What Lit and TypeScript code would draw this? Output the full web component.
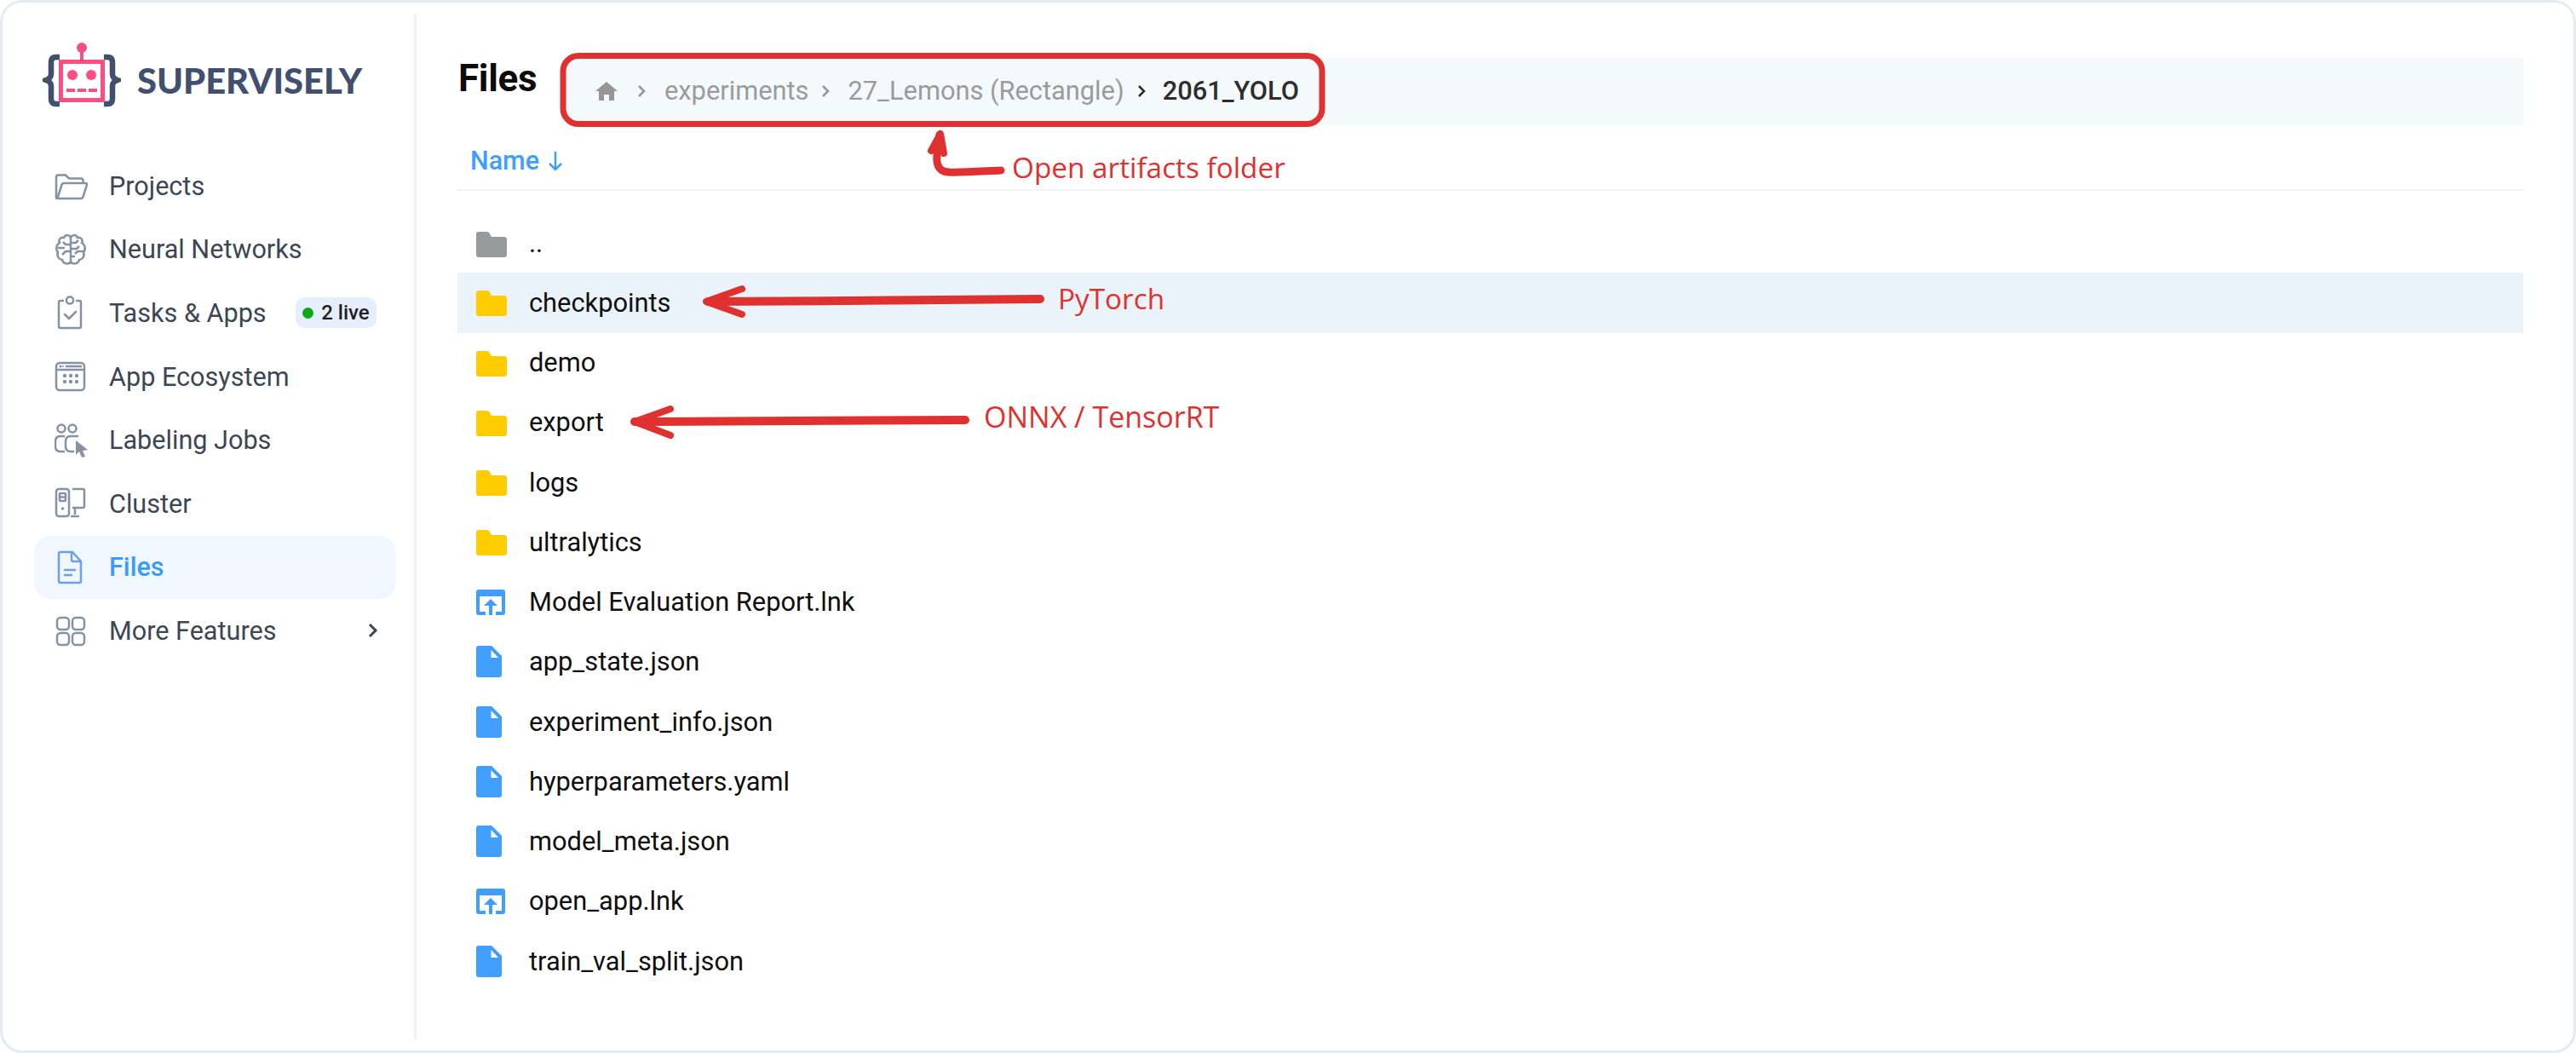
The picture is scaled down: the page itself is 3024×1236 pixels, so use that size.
import { LitElement, html, css, svg } from "lit";
import { customElement } from "lit/decorators.js";

const navIcons: Record<string, unknown> = {
  folder: svg`<path d="M2 34V10q0-2.500 2.500-2.500H13l4 4h14q2.500 0 2.500 2.500v3"/><path d="M2 34.500q1.500 0 2-1.500l4.500-14q.5-2 2.500-2h25q2.500 0 2 2l-4.500 14q-.5 2-2.500 2H4q-2 0-2-1.500Z"/>`,
  brain: svg`<path d="M19 7C19 3 13 1 11 6 7 5 4 9 6 12 2 14 1 20 4 23 2 28 6 32 9 32 10 37 17 38 19 34 21 38 28 37 29 32 32 32 36 28 34 23 37 20 36 14 32 12 34 9 31 5 27 6 25 1 19 3 19 7V34"/><path d="M19 14H13L10 11M4 18H12M19 22H13L9 26M19 28H24M19 12H25L28 9M19 19H26L29 16M34 22H27L24 25"/>`,
  tasks: svg`<path d="M11 6H7q-2 0-2 2v28q0 2 2 2h22q2 0 2-2V8q0-2-2-2h-4"/><rect x="14" y="1.500" width="8" height="8" rx="3.500"/><path d="M12 22l5 5 8-8" stroke-linecap="round"/>`,
  app: svg`<rect x="2" y="4" width="33" height="32" rx="4"/><path d="M2 12h33M13 8h19"/><g fill="#8592a3" stroke="none"><circle cx="7" cy="8" r="1.500"/><circle cx="10" cy="8" r="1"/><circle cx="12" cy="19" r="2.200"/><circle cx="19" cy="19" r="2.200"/><circle cx="26" cy="19" r="2.200"/><circle cx="12" cy="26" r="2.200"/><circle cx="19" cy="26" r="2.200"/><circle cx="26" cy="26" r="2.200"/></g>`,
  jobs: svg`<circle cx="8" cy="6" r="4.500"/><circle cx="21" cy="6" r="4.500"/><path d="M12 15H7q-6 0-6 6v6q0 6 6 6h5M28 15H19q-6 0-6 6v6q0 6 6 6h4"/><path d="M25 20l14 11-6 1 3 7-4 1-3-7-4 4Z" fill="#8592a3" stroke="none"/>`,
  cluster: svg`<rect x="2" y="3" width="15" height="32" rx="3"/><rect x="6" y="8" width="7" height="9" rx="1"/><path d="M6 12.500h7"/><circle cx="9.500" cy="26" r="1.800" fill="#8592a3" stroke="none"/><path d="M21 3h12q2 0 2 2v18q0 2-2 2H21M24 25v8M19 35h10"/>`,
  files: svg`<path d="M7 2h14l10 11v23q0 2-2 2H7q-2 0-2-2V4q0-2 2-2Z"/><path d="M20 2v9q0 2 2 2h9M11 23h14M11 29h10"/>`,
  more: svg`<rect x="3" y="5" width="14" height="14" rx="4"/><rect x="21" y="5" width="14" height="14" rx="4"/><rect x="3" y="23" width="14" height="14" rx="4"/><rect x="21" y="23" width="14" height="14" rx="4"/>`,
};

const nav = [
  ["folder", "Projects"],
  ["brain", "Neural Networks"],
  ["tasks", "Tasks & Apps"],
  ["app", "App Ecosystem"],
  ["jobs", "Labeling Jobs"],
  ["cluster", "Cluster"],
  ["files", "Files"],
  ["more", "More Features"],
];

const rows: [string, string][] = [
  ["up", ".."],
  ["dir", "checkpoints"],
  ["dir", "demo"],
  ["dir", "export"],
  ["dir", "logs"],
  ["dir", "ultralytics"],
  ["lnk", "Model Evaluation Report.lnk"],
  ["doc", "app_state.json"],
  ["doc", "experiment_info.json"],
  ["doc", "hyperparameters.yaml"],
  ["doc", "model_meta.json"],
  ["lnk", "open_app.lnk"],
  ["doc", "train_val_split.json"],
];

function fileIcon(kind: string) {
  if (kind === "up" || kind === "dir") {
    const c = kind === "up" ? "#979a9b" : "#ffcc00";
    return html`<svg class="ficon ${kind}" viewBox="0 0 36 30"><path fill=${c} d="M3 0h10q1.500 0 2.500 1.500L18 6h15q3 0 3 3v18q0 3-3 3H3q-3 0-3-3V3q0-3 3-3Z"/></svg>`;
  }
  if (kind === "lnk") {
    return html`<svg class="ficon lnk" viewBox="0 0 34 30"><path fill="#409eff" d="M3 0h28q3 0 3 3v24q0 3-3 3h-8v-4h7V8H4v18h7v4H3q-3 0-3-3V3q0-3 3-3Z"/><path fill="#409eff" d="M17 11l8 8h-6v11h-4V19H9Z"/></svg>`;
  }
  return html`<svg class="ficon doc" viewBox="0 0 30 37"><path fill="#409eff" d="M3 0h15l12 12v22q0 3-3 3H3q-3 0-3-3V3q0-3 3-3Z"/><path fill="#fff" d="M17.500 5l8.500 9h-8.500Z"/></svg>`;
}

@customElement("app-root")
export class AppRoot extends LitElement {
  static styles = css`
    :host { display: block; width: 3024px; height: 1236px; background: #fff; overflow: hidden; }
    * { box-sizing: border-box; }
    .frame {
      position: relative; height: 1236px; display: flex; padding: 13px 0;
      border: 3px solid #e4ebf1; border-radius: 26px; background: #fff;
      font-family: Roboto, sans-serif;
    }
    .side { width: 486px; flex: none; border-right: 3px solid #edf2f7; padding: 0 21px 0 37px; }
    .logo { height: 112px; display: flex; align-items: center; margin: 22px 0 0 10px; gap: 19px; }
    .logo svg { width: 92px; height: 80px; flex: none; margin-top: -8px; }
    .logo span { font: 900 41.700px Lato, sans-serif; color: #42506f; }
    nav { margin-top: 31px; display: flex; flex-direction: column; }
    .item {
      height: 74.600px; display: flex; align-items: center; padding-left: 24px;
      border-radius: 20px; font-size: 30.600px; color: #3d4654; position: relative;
    }
    .item svg.nic { width: 40px; height: 40px; flex: none; margin-right: 24px; fill: none; stroke: #8592a3; stroke-width: 2.500; }
    .item.on { background: #f0f7ff; color: #3a9bfb; font-weight: 500; }
    .item.on svg.nic { stroke: #6c9fec; }
    .live {
      margin-left: auto; margin-right: 23px; height: 36px; width: 95px; background: #e6eefd; border-radius: 11px;
      display: flex; align-items: center; justify-content: center; gap: 9px; font-size: 24px; font-weight: 500; color: #1c1f24;
    }
    .dot { width: 13px; height: 13px; border-radius: 50%; background: #0caa16; }
    .chev { margin-left: auto; margin-right: 20px; width: 13px; height: 20px; fill: none; stroke: #3d4654; stroke-width: 3; }
    .main { flex: 1; padding: 0 59px 0 48px; min-width: 0; }
    .head { display: flex; align-items: flex-start; height: 131px; padding-top: 52px; }
    .head h1 { margin: -2px 0 0 1px; font-size: 44px; font-weight: 700; color: #0b0b0b; line-height: 1.200; width: 122px; flex: none; letter-spacing: -.3px; }
    .crumbs {
      flex: 1; height: 79px; background: #f4f9fc; display: flex; align-items: center; padding: 0 0 2px 39px;
      font-size: 30.800px; color: #9b9b9b;
    }
    .crumbs svg.home { width: 26px; height: 22px; fill: #969696; margin-right: 23px; }
    .crumbs svg.sep { width: 10px; height: 16px; fill: none; stroke: #969696; stroke-width: 2.500; margin: 0 21px 0 15px; flex: none; }
    .crumbs svg.sep.first { margin: 0 22px 0 0; }
    .crumbs svg.sep.last { stroke: #2b2b2b; margin: 0 20px 0 15px; }
    .crumbs b { color: #2e2e2e; font-weight: 500; }
    .thead {
      height: 85px; padding: 16px 0 0 15px; margin-top: -8px; border-bottom: 2px solid #f0f2f4; display: flex; align-items: center;
      font-size: 30.500px; font-weight: 500; color: #409eff; gap: 9px;
    }
    .thead svg { width: 20px; height: 26px; fill: none; stroke: #409eff; stroke-width: 2.500; }
    .rows { margin-top: 26px; }
    .row { height: 70.250px; display: flex; align-items: center; font-size: 30.800px; color: #0f0f0f; }
    .row.hl { background: #eaf3f9; }
    .ic { width: 84px; flex: none; padding-left: 22px; display: flex; align-items: center; }
    .ficon { width: 36px; height: 30px; display: block; }
    .ficon.lnk { width: 34px; }
    .ficon.doc { width: 30px; height: 37px; }
    .ficon.dir { position: relative; top: 1px; }
    .ficon.up { position: relative; top: 2px; }
    .notes { position: absolute; left: -3px; top: -3px; width: 3024px; height: 1236px; pointer-events: none; }
    .notes path { fill: none; stroke: #e03131; stroke-linecap: round; stroke-linejoin: round; }
    .note { position: absolute; font: 400 33.300px "Open Sans", sans-serif; color: #e03131; white-space: nowrap; line-height: 40px; }
    .n1 { left: 1185px; top: 173px; }
    .n2 { left: 1239px; top: 327px; }
    .n3 { left: 1152px; top: 466px; font-size: 34px; }
  `;

  render() {
    return html`<div class="frame">
      <aside class="side">
        <div class="logo">
          <svg viewBox="0 0 92 80">
            <g fill="none" stroke="#42506f" stroke-width="6.500">
              <path d="M20 17h-4q-6 0-6 6v14q0 5-6 7 6 2 6 7v15q0 6 6 6h4"/>
              <path d="M72 17h4q6 0 6 6v14q0 5 6 7-6 2-6 7v15q0 6-6 6h-4"/>
            </g>
            <g fill="#fb4f83">
              <circle cx="46" cy="6" r="6"/><rect x="44" y="8" width="4" height="14"/>
              <path fill-rule="evenodd" d="M19 20h54v50H19Zm5 5v40h44V25Z"/>
              <circle cx="35" cy="38" r="6"/><circle cx="57" cy="38" r="6"/>
              <rect x="28" y="54" width="10" height="4"/><rect x="41" y="54" width="10" height="4"/><rect x="54" y="54" width="10" height="4"/>
            </g>
          </svg>
          <span>SUPERVISELY</span>
        </div>
        <nav>
          ${nav.map(([ic, t]) => html`<div class="item ${t === "Files" ? "on" : ""}">
            <svg class="nic" viewBox="0 0 40 40">${navIcons[ic]}</svg>${t}
            ${t === "Tasks & Apps" ? html`<span class="live"><i class="dot"></i>2 live</span>` : ""}
            ${t === "More Features" ? html`<svg class="chev" viewBox="0 0 13 20"><path d="M2 3l7 7-7 7"/></svg>` : ""}
          </div>`)}
        </nav>
      </aside>
      <main class="main">
        <div class="head">
          <h1>Files</h1>
          <div class="crumbs">
            <svg class="home" viewBox="0 0 26 22"><path d="M13 0l13 11h-4v11h-6v-7h-6v7H4V11H0Z"/></svg>
            <svg class="sep first" viewBox="0 0 10 16"><path d="M2 2l6 6-6 6"/></svg>
            experiments
            <svg class="sep" viewBox="0 0 10 16"><path d="M2 2l6 6-6 6"/></svg>
            27_Lemons (Rectangle)
            <svg class="sep last" viewBox="0 0 10 16"><path d="M2 2l6 6-6 6"/></svg>
            <b>2061_YOLO</b>
          </div>
        </div>
        <div class="thead">Name <svg viewBox="0 0 20 26"><path d="M10 2v21M3 16l7 7 7-7"/></svg></div>
        <div class="rows">
          ${rows.map(([k, n]) => html`<div class="row ${n === "checkpoints" ? "hl" : ""}"><span class="ic">${fileIcon(k)}</span>${n}</div>`)}
        </div>
      </main>
      <svg class="notes" viewBox="0 0 3024 1236">
        <rect x="661" y="65.500" width="891" height="80" rx="18" fill="none" stroke="#e03131" stroke-width="7"/>
        <path stroke-width="9" d="M1175 200c-22 1-50 3-62 2-12-1-14-10-13-20 0-8 1-16 3-24"/>
        <path stroke-width="8" d="M1093 177l11-20 4 23"/>
        <path stroke-width="10" d="M1221 351c-120 2-260 2-390 3"/>
        <path stroke-width="8" d="M871 339l-42 15 42 15"/>
        <path stroke-width="10" d="M1133 493c-130 1-260 2-388 2"/>
        <path stroke-width="8" d="M787 480l-42 15 42 16"/>
      </svg>
      <span class="note n1">Open artifacts folder</span>
      <span class="note n2">PyTorch</span>
      <span class="note n3">ONNX / TensorRT</span>
    </div>`;
  }
}
